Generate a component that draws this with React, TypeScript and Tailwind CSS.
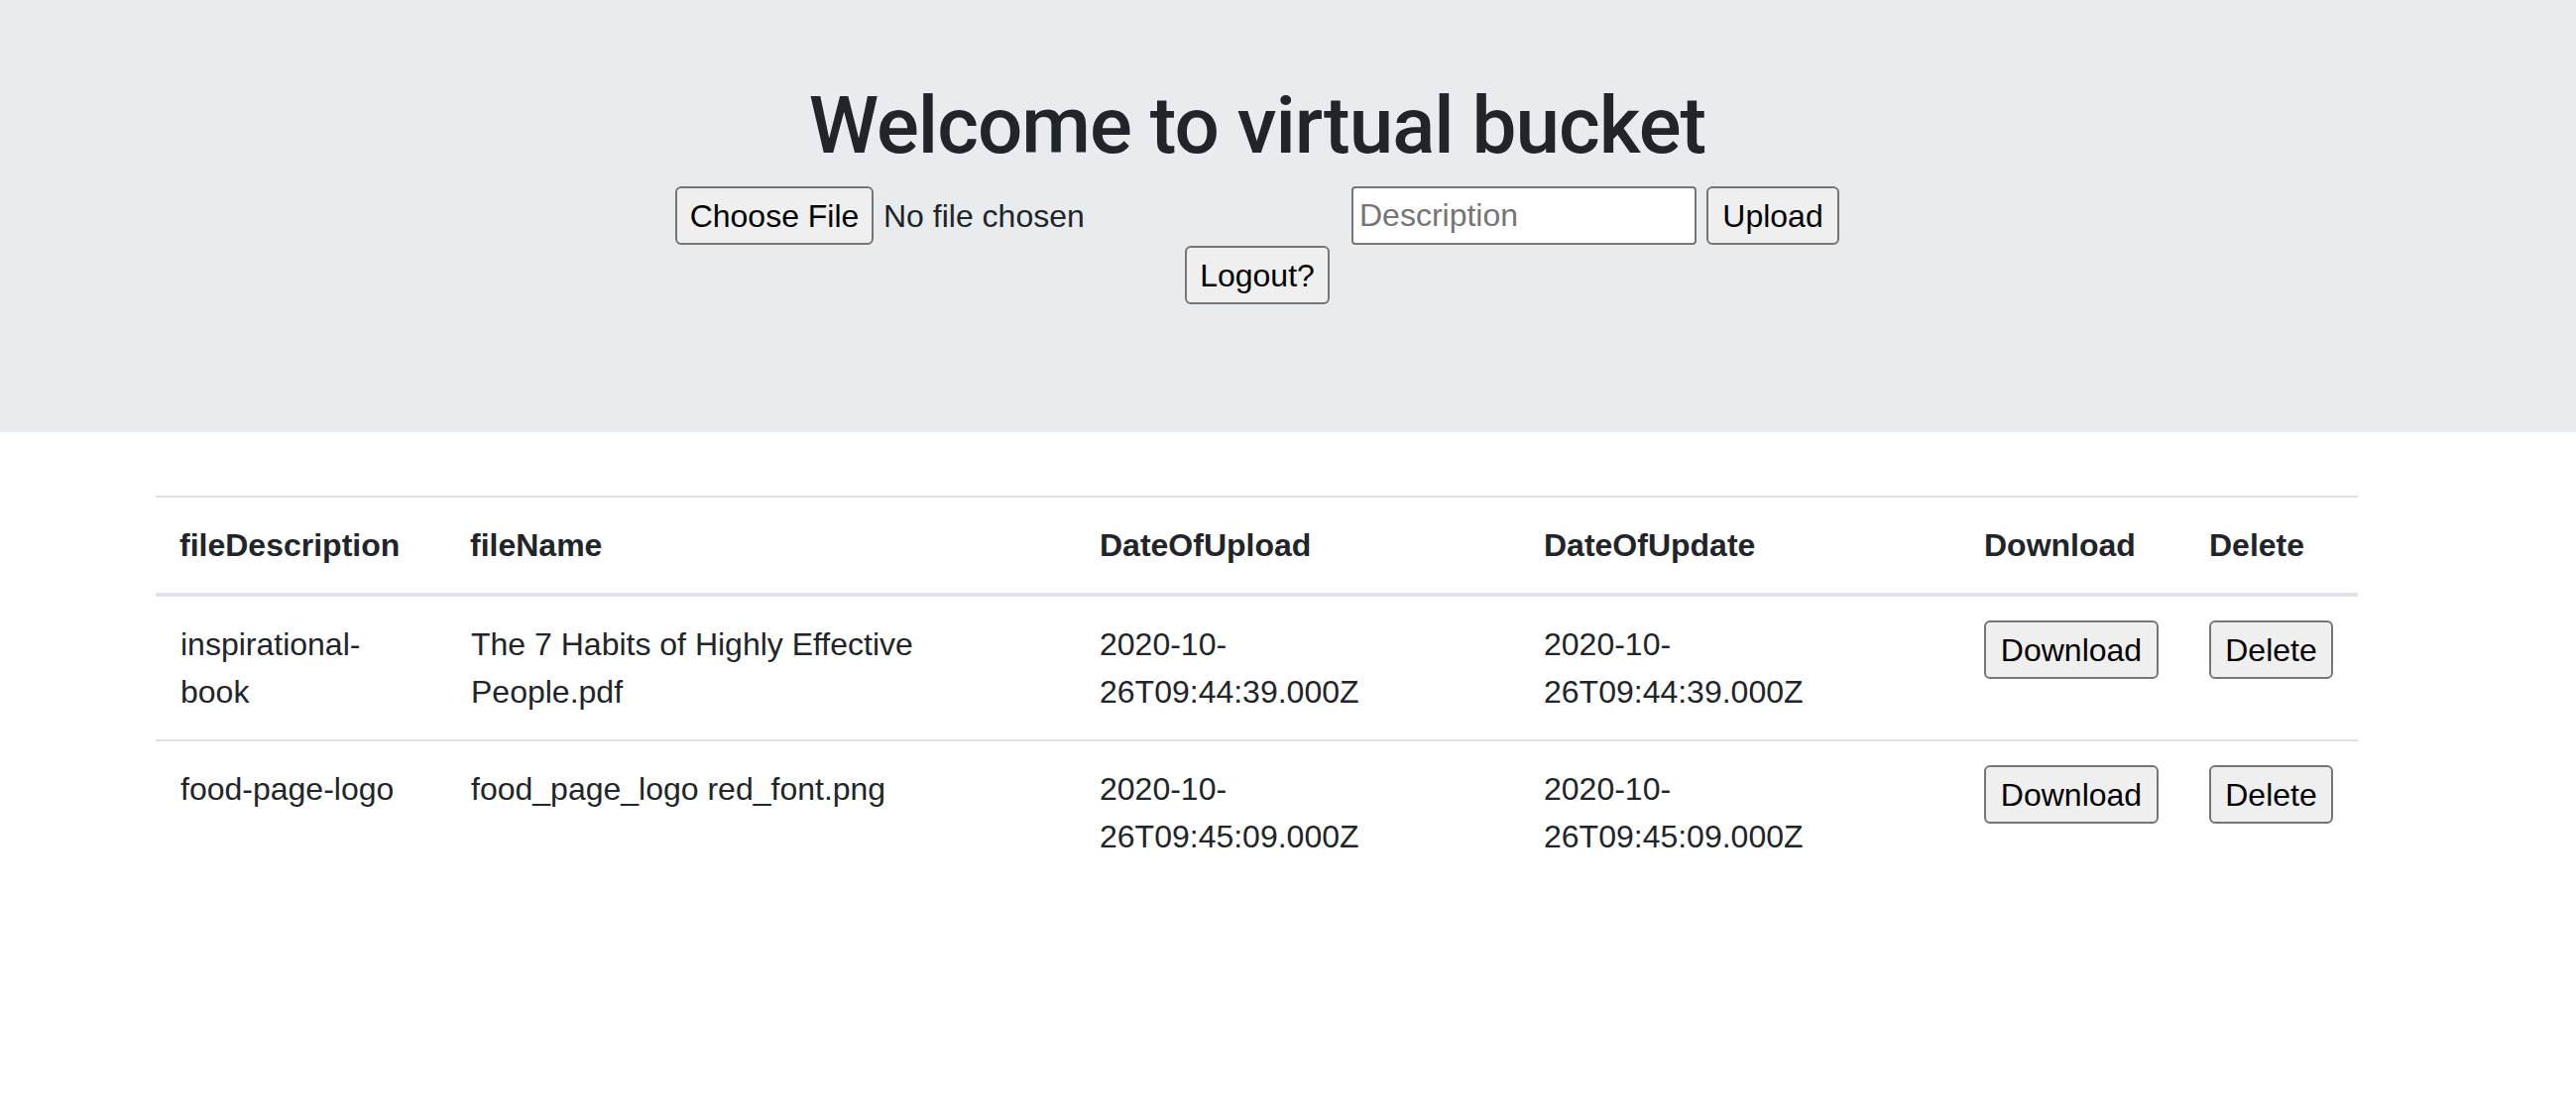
import React from "react";

type FileRow = {
  description: string;
  name: string;
  uploaded: string;
  updated: string;
};

const FILES: FileRow[] = [
  {
    description: "inspirational-book",
    name: "The 7 Habits of Highly Effective People.pdf",
    uploaded: "2020-10-26T09:44:39.000Z",
    updated: "2020-10-26T09:44:39.000Z",
  },
  {
    description: "food-page-logo",
    name: "food_page_logo red_font.png",
    uploaded: "2020-10-26T09:45:09.000Z",
    updated: "2020-10-26T09:45:09.000Z",
  },
];

// Native-looking grey button, sized like the screenshot (2x zoom)
const NativeButton = ({
  children,
  className = "",
}: {
  children: React.ReactNode;
  className?: string;
}) => (
  <button
    className={`h-[59px] border-2 border-[#767676] rounded-[6px] bg-[#efefef] text-black text-[32px] leading-none ${className}`}
  >
    {children}
  </button>
);

const UploadForm = () => (
  <div className="flex flex-col items-center">
    <div className="flex items-center gap-[10px] h-[59px]">
      <div className="w-[672px] flex items-center">
        <NativeButton className="w-[200px]">Choose File</NativeButton>
        <span className="ml-[10px] text-[32px] text-[#212529]">
          No file chosen
        </span>
      </div>
      <input
        type="text"
        placeholder="Description"
        className="w-[348px] h-[59px] border-2 border-[#767676] rounded-[4px] bg-white px-[6px] text-[32px] text-[#212529] placeholder:text-[#757575] outline-none"
      />
      <NativeButton className="w-[134px]">Upload</NativeButton>
    </div>
    <NativeButton className="w-[146px] mt-[1px]">Logout?</NativeButton>
  </div>
);

const FilesTable = ({ files }: { files: FileRow[] }) => {
  const th =
    "p-[24px] text-left align-bottom font-bold border-t-2 border-b-4 border-[#dee2e6]";
  const td = "p-[24px] align-top border-t-2 border-[#dee2e6]";

  return (
    <table className="w-[2221px] table-fixed border-collapse text-[32px] leading-[48px] text-[#212529]">
      <colgroup>
        <col className="w-[293px]" />
        <col className="w-[635px]" />
        <col className="w-[448px]" />
        <col className="w-[444px]" />
        <col className="w-[227px]" />
        <col className="w-[174px]" />
      </colgroup>
      <thead>
        <tr>
          <th className={th}>fileDescription</th>
          <th className={th}>fileName</th>
          <th className={th}>DateOfUpload</th>
          <th className={th}>DateOfUpdate</th>
          <th className={th}>Download</th>
          <th className={th}>Delete</th>
        </tr>
      </thead>
      <tbody>
        {files.map((f) => (
          <tr key={f.name}>
            <td className={`${td} pl-[25px]`}>{f.description}</td>
            <td className={`${td} pl-[25px]`}>{f.name}</td>
            <td className={`${td} pr-[60px]`}>{f.uploaded}</td>
            <td className={`${td} pr-[60px]`}>{f.updated}</td>
            <td className={td}>
              <NativeButton className="block w-[176px]">Download</NativeButton>
            </td>
            <td className={td}>
              <NativeButton className="block w-[125px]">Delete</NativeButton>
            </td>
          </tr>
        ))}
      </tbody>
    </table>
  );
};

export default function App() {
  return (
    <div className="w-full min-h-[1130px] bg-white font-['Liberation_Sans',Arial,sans-serif]">
      <div className="w-full h-[436px] bg-[#e9ecef]">
        <div className="w-[2536px] flex flex-col items-center pt-[79px]">
          <h1 className="font-['Roboto',Arial,sans-serif] text-[80px] leading-[96px] font-medium tracking-[-1px] text-[#212529] mb-[13px]">
            Welcome to virtual bucket
          </h1>
          <UploadForm />
        </div>
      </div>

      <div className="w-[2536px] px-[157px] mt-[64px]">
        <FilesTable files={FILES} />
      </div>
    </div>
  );
}
